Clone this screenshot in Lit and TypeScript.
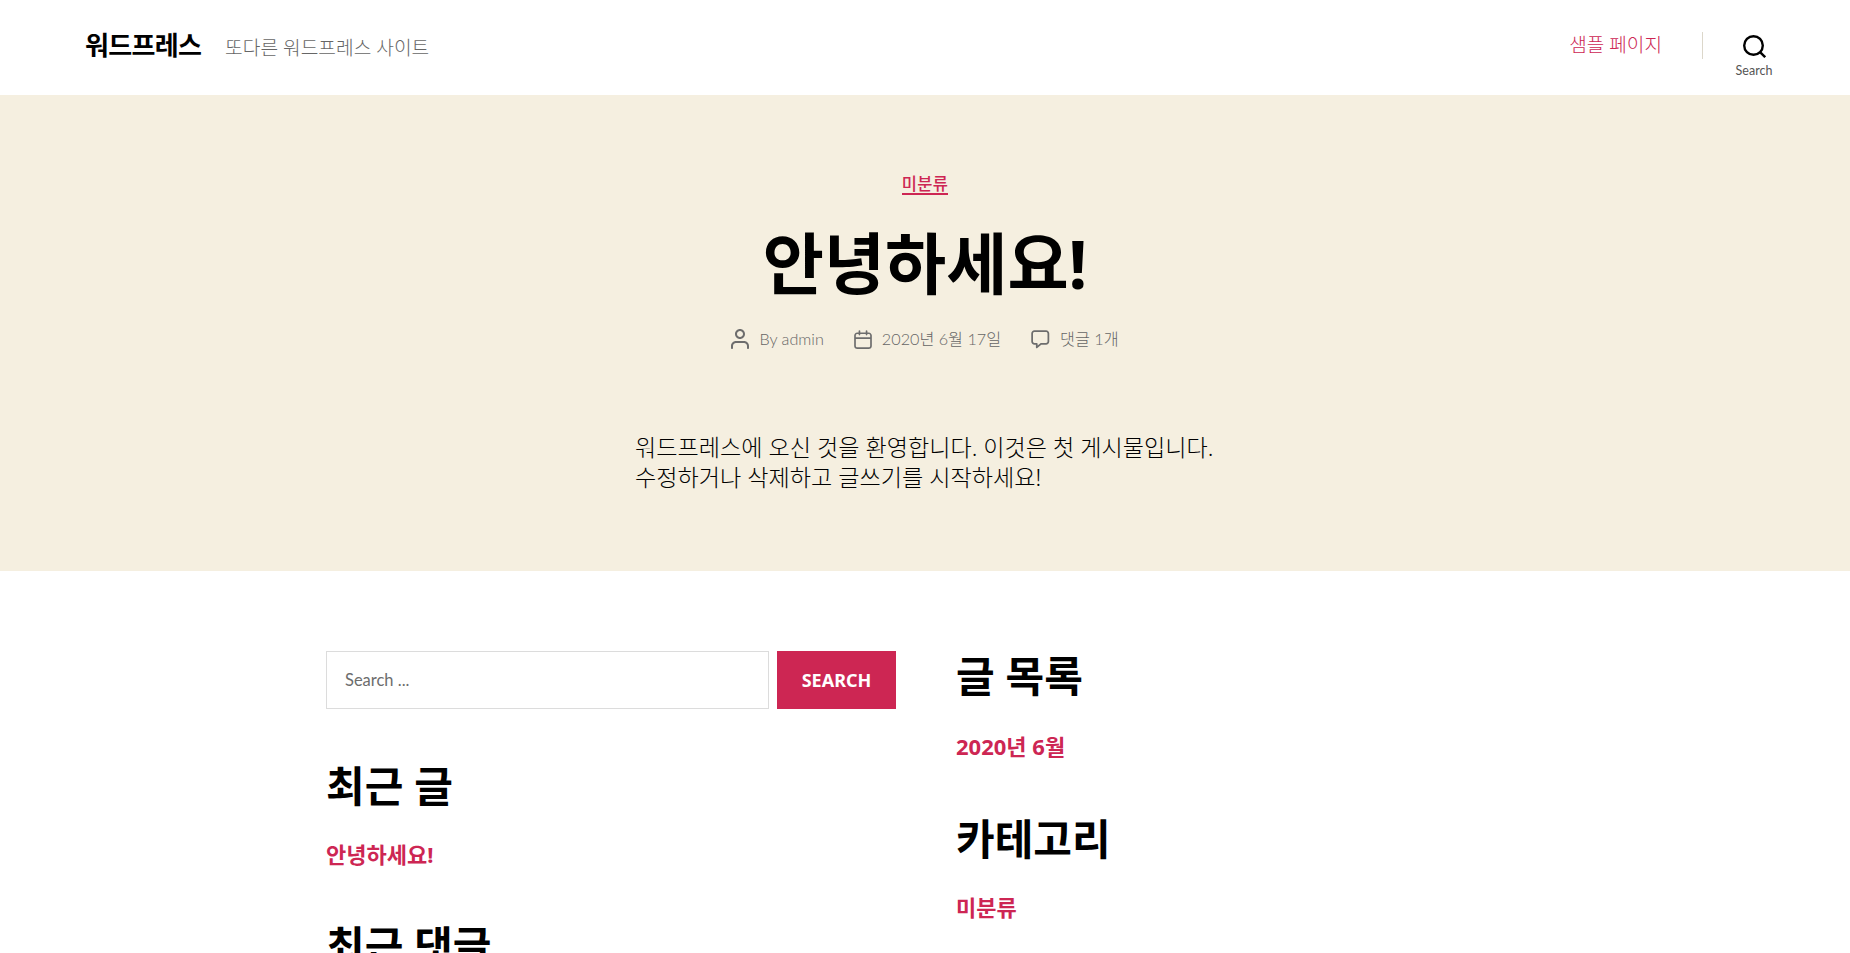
import { LitElement, html, css } from "lit";
import { customElement } from "lit/decorators.js";

@customElement("app-root")
export class AppRoot extends LitElement {
  static styles = css`
    :host { display: block; height: 953px; overflow: hidden; background: #fff; color: #000;
      font-family: "Noto Sans", "Noto Sans CJK KR", sans-serif; }
    a { color: inherit; text-decoration: none; }
    .header { height: 95px; display: flex; align-items: stretch; padding: 0 46px 0 85px; box-sizing: border-box; }
    .brand { display: flex; align-items: baseline; gap: 24px; padding-top: 27px; flex: 1; }
    .site { font-size: 26px; line-height: 36px; font-weight: 700; letter-spacing: -0.7px; }
    .tag { font-size: 19.2px; line-height: 36px; color: #666; font-weight: 300; }
    .nav { color: #cd2653; font-size: 19.1px; line-height: 36px; padding-top: 27px; font-weight: 300; }
    .sep { width: 1px; height: 27px; background: #dcd7ca; margin: 32px 0 0 40px; }
    .toggle { width: 100px; margin-left: 1px; display: flex; flex-direction: column; align-items: center; padding-top: 35px; box-sizing: border-box; }
    .toggle svg { display: block; }
    .toggle span { font-family: "Lato", sans-serif; font-size: 12.5px; line-height: 16px; color: #555; margin-top: 5px; }
    .hero { background: #f5efe0; height: 476px; box-sizing: border-box; padding-top: 80px; text-align: center; }
    .cat { display: inline-block; color: #cd2653; font-size: 16.5px; line-height: 18px; letter-spacing: 0.3px; border-bottom: 2px solid #cd2653; font-weight: 500; vertical-align: top; }
    h1 { margin: 26px 0 0; font-size: 66.5px; line-height: 80px; font-weight: 700; }
    .meta { margin-top: 24px; display: flex; justify-content: center; gap: 30px; color: #666; font-family: "Lato", "Noto Sans CJK KR", sans-serif; font-size: 16.2px; line-height: 24px; font-weight: 300; }
    .meta div { display: flex; align-items: center; gap: 10px; }
    .meta svg { display: block; fill: #6d6d6d; }
    .entry { width: 580px; margin: 81px auto 0; text-align: left; font-size: 23.1px; line-height: 30px; font-weight: 300; word-break: keep-all; }
    .widgets { display: flex; padding: 80px 0 0 326px; }
    .col { width: 630px; }
    .search { display: flex; gap: 8px; width: 570px; height: 58px; margin-bottom: 52px; }
    .input { flex: 1; border: 1px solid #dcdcdc; box-sizing: border-box; display: flex; align-items: center; padding-left: 18px; padding-bottom: 1px; color: #6d6d6d; font-family: "Lato", sans-serif; font-size: 16.5px; }
    .btn { width: 119px; background: #cd2653; color: #fff; font-weight: 700; font-size: 18px; display: flex; align-items: center; justify-content: center; }
    h2 { margin: 0 0 28px; font-size: 42px; line-height: 50px; font-weight: 700; }
    .link { color: #cd2653; font-size: 22px; line-height: 30px; font-weight: 700; margin-bottom: 52px; }
    .archive { margin-top: 30px; margin-bottom: 53px; }
  `;

  render() {
    return html`
      <div class="header">
        <div class="brand"><a class="site">워드프레스</a><span class="tag">또다른 워드프레스 사이트</span></div>
        <a class="nav">샘플 페이지</a>
        <div class="sep"></div>
        <div class="toggle">
          <svg width="23" height="23" viewBox="0 0 23 23" fill="none" stroke="#000" stroke-width="2.4"><circle cx="10.5" cy="10.5" r="9.3"/><path d="M17.3 17.3L22.2 22.2"/></svg>
          <span>Search</span>
        </div>
      </div>
      <div class="hero">
        <a class="cat">미분류</a>
        <h1>안녕하세요!</h1>
        <div class="meta">
          <div><svg width="18" height="20" viewBox="0 0 18 20"><path d="M18,19 C18,19.5522847 17.5522847,20 17,20 C16.4477153,20 16,19.5522847 16,19 L16,17 C16,15.3431458 14.6568542,14 13,14 L5,14 C3.34314575,14 2,15.3431458 2,17 L2,19 C2,19.5522847 1.55228475,20 1,20 C0.44771525,20 0,19.5522847 0,19 L0,17 C0,14.2385763 2.23857625,12 5,12 L13,12 C15.7614237,12 18,14.2385763 18,17 L18,19 Z M9,10 C6.23857625,10 4,7.76142375 4,5 C4,2.23857625 6.23857625,0 9,0 C11.7614237,0 14,2.23857625 14,5 C14,7.76142375 11.7614237,10 9,10 Z M9,8 C10.6568542,8 12,6.65685425 12,5 C12,3.34314575 10.6568542,2 9,2 C7.34314575,2 6,3.34314575 6,5 C6,6.65685425 7.34314575,8 9,8 Z"/></svg><span>By admin</span></div>
          <div><svg width="18" height="19" viewBox="0 0 18 19"><path d="M4.60069444,4.09375 L3.25,4.09375 C2.47334957,4.09375 1.84375,4.72334957 1.84375,5.5 L1.84375,7.26736111 L16.15625,7.26736111 L16.15625,5.5 C16.15625,4.72334957 15.5266504,4.09375 14.75,4.09375 L13.3993056,4.09375 L13.3993056,4.55555556 C13.3993056,5.02154581 13.0215458,5.39930556 12.5555556,5.39930556 C12.0895653,5.39930556 11.7118056,5.02154581 11.7118056,4.55555556 L11.7118056,4.09375 L6.28819444,4.09375 L6.28819444,4.55555556 C6.28819444,5.02154581 5.9104347,5.39930556 5.44444444,5.39930556 C4.97845419,5.39930556 4.60069444,5.02154581 4.60069444,4.55555556 L4.60069444,4.09375 Z M6.28819444,2.40625 L11.7118056,2.40625 L11.7118056,1 C11.7118056,0.534009742 12.0895653,0.15625 12.5555556,0.15625 C13.0215458,0.15625 13.3993056,0.534009742 13.3993056,1 L13.3993056,2.40625 L14.75,2.40625 C16.4586309,2.40625 17.84375,3.79136906 17.84375,5.5 L17.84375,15.875 C17.84375,17.5836309 16.4586309,18.96875 14.75,18.96875 L3.25,18.96875 C1.54136906,18.96875 0.15625,17.5836309 0.15625,15.875 L0.15625,5.5 C0.15625,3.79136906 1.54136906,2.40625 3.25,2.40625 L4.60069444,2.40625 L4.60069444,1 C4.60069444,0.534009742 4.97845419,0.15625 5.44444444,0.15625 C5.9104347,0.15625 6.28819444,0.534009742 6.28819444,1 L6.28819444,2.40625 Z M1.84375,8.95486111 L1.84375,15.875 C1.84375,16.6516504 2.47334957,17.28125 3.25,17.28125 L14.75,17.28125 C15.5266504,17.28125 16.15625,16.6516504 16.15625,15.875 L16.15625,8.95486111 L1.84375,8.95486111 Z"/></svg><span>2020년 6월 17일</span></div>
          <div><svg width="19" height="19" viewBox="0 0 19 19"><path d="M9.43016863,13.2235931 C9.58624731,13.094699 9.7823475,13.0241935 9.98476849,13.0241935 L15.0564516,13.0241935 C15.8581553,13.0241935 16.5080645,12.3742843 16.5080645,11.5725806 L16.5080645,3.44354839 C16.5080645,2.64184472 15.8581553,1.99193548 15.0564516,1.99193548 L3.44354839,1.99193548 C2.64184472,1.99193548 1.99193548,2.64184472 1.99193548,3.44354839 L1.99193548,11.5725806 C1.99193548,12.3742843 2.64184472,13.0241935 3.44354839,13.0241935 L5.76612903,13.0241935 C6.24715123,13.0241935 6.63709677,13.4141391 6.63709677,13.8951613 L6.63709677,15.5301903 L9.43016863,13.2235931 Z M3.44354839,14.766129 C1.67980032,14.766129 0.25,13.3363287 0.25,11.5725806 L0.25,3.44354839 C0.25,1.67980032 1.67980032,0.25 3.44354839,0.25 L15.0564516,0.25 C16.8201997,0.25 18.25,1.67980032 18.25,3.44354839 L18.25,11.5725806 C18.25,13.3363287 16.8201997,14.766129 15.0564516,14.766129 L10.2979143,14.766129 L6.32072889,18.0506004 C5.75274472,18.5196577 4.89516129,18.1156602 4.89516129,17.3790323 L4.89516129,14.766129 L3.44354839,14.766129 Z"/></svg><span>댓글 1개</span></div>
        </div>
        <div class="entry">워드프레스에 오신 것을 환영합니다. 이것은 첫 게시물입니다. 수정하거나 삭제하고 글쓰기를 시작하세요!</div>
      </div>
      <div class="widgets">
        <div class="col">
          <div class="search"><div class="input">Search ...</div><div class="btn">SEARCH</div></div>
          <h2>최근 글</h2>
          <div class="link">안녕하세요!</div>
          <h2>최근 댓글</h2>
        </div>
        <div class="col">
          <h2>글 목록</h2>
          <div class="link archive">2020년 6월</div>
          <h2>카테고리</h2>
          <div class="link">미분류</div>
        </div>
      </div>
    `;
  }
}
